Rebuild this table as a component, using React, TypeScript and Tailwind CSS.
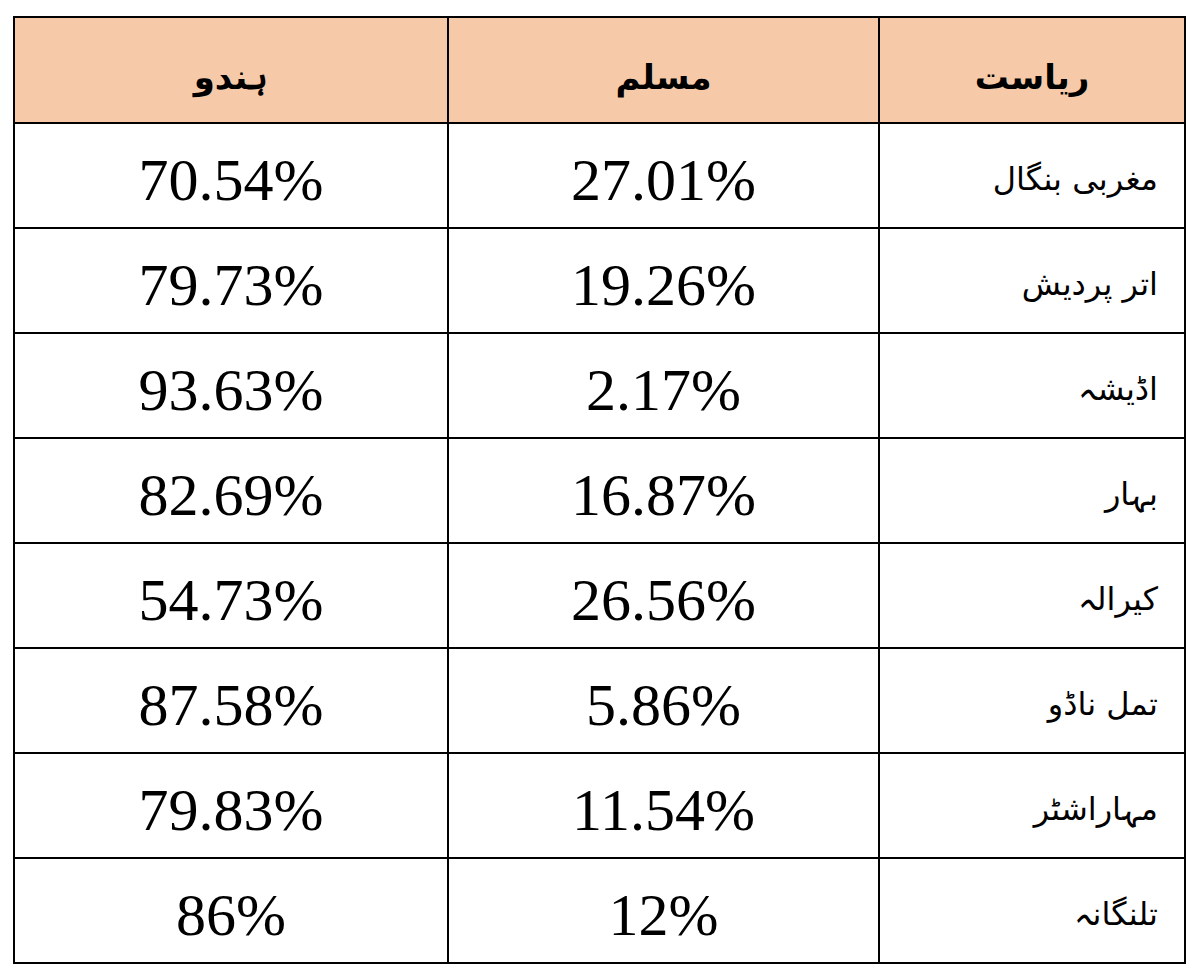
import React from "react";

const rows: [string, string, string][] = [
  ["70.54%", "27.01%", "مغربی بنگال"],
  ["79.73%", "19.26%", "اتر پردیش"],
  ["93.63%", "2.17%", "اڈیشہ"],
  ["82.69%", "16.87%", "بہار"],
  ["54.73%", "26.56%", "کیرالہ"],
  ["87.58%", "5.86%", "تمل ناڈو"],
  ["79.83%", "11.54%", "مہاراشٹر"],
  ["86%", "12%", "تلنگانہ"],
];

function HeaderCell({ children }: { children: React.ReactNode }) {
  return (
    <div
      dir="rtl"
      className="bg-[#f6caa9] flex items-center justify-center pt-[14px] text-[34px] font-bold text-black font-['DejaVu_Sans','Noto_Sans',sans-serif]"
    >
      {children}
    </div>
  );
}

function NumCell({ children }: { children: React.ReactNode }) {
  return (
    <div className="bg-white flex items-center justify-center pt-[8px] text-[60px] leading-none text-black font-['Liberation_Serif','Times_New_Roman',serif]">
      {children}
    </div>
  );
}

function StateCell({ children }: { children: React.ReactNode }) {
  return (
    <div
      dir="rtl"
      className="bg-white flex items-center justify-start pr-[26px] pt-[6px] text-[32px] text-black font-['DejaVu_Sans','Noto_Sans',sans-serif]"
    >
      {children}
    </div>
  );
}

export default function App() {
  return (
    <div className="w-[1200px] h-[975px] bg-white pl-[13px] pt-[16px]">
      <div className="grid grid-cols-[432px_429px_304px] grid-rows-[104px_repeat(8,103px)] gap-[2px] p-[2px] bg-black w-[1173px]">
        <HeaderCell>ہندو</HeaderCell>
        <HeaderCell>مسلم</HeaderCell>
        <HeaderCell>ریاست</HeaderCell>
        {rows.map((r, i) => (
          <React.Fragment key={i}>
            <NumCell>{r[0]}</NumCell>
            <NumCell>{r[1]}</NumCell>
            <StateCell>{r[2]}</StateCell>
          </React.Fragment>
        ))}
      </div>
    </div>
  );
}
